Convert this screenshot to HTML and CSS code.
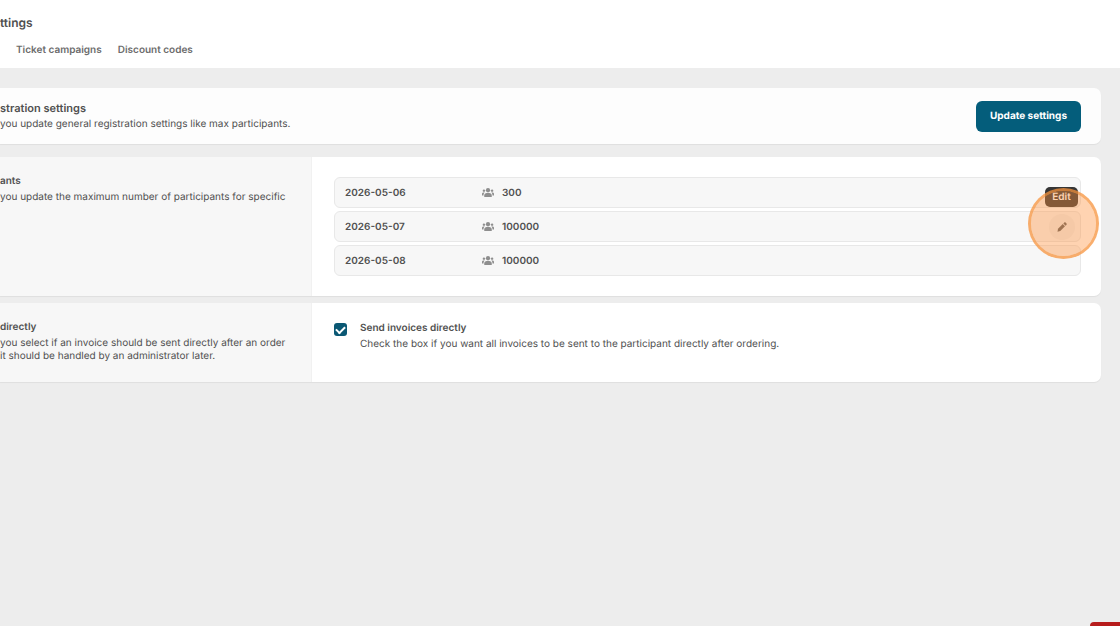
FILE: index.html
```html
<!DOCTYPE html>
<html lang="en">
<head>
  <meta charset="UTF-8">
  <title>Settings</title>
  <link rel="stylesheet" href="styles.css">
</head>
<body>

<svg class="sprite" aria-hidden="true">
  <symbol id="people" viewBox="0 0 24 18">
    <circle cx="12" cy="4.5" r="4.3"/>
    <circle cx="3.8" cy="5.3" r="2.4"/>
    <circle cx="20.2" cy="5.3" r="2.4"/>
    <path d="M4.500 18v-3C4.500 11.800 6.500 10 9.500 10h5c3 0 5 1.800 5 5v3z"/>
    <path d="M0 15v-3c0-2 1.200-3 3-3h2.500C3.800 10.500 3 12.500 3 15z"/>
    <path d="M24 15v-3c0-2-1.200-3-3-3h-2.500c1.700 1.500 2.500 3.500 2.500 6z"/>
  </symbol>
  <symbol id="pencil" viewBox="0 0 20 20">
    <path d="M11.500 4L16 8.500 6.500 18 1 19.500 2 13.500z"/>
    <path d="M12.700 2.800l1.500-1.500c1-1 2.300-1 3.300 0l1.200 1.200c1 1 1 2.300 0 3.300l-1.500 1.500z"/>
  </symbol>
</svg>

<header class="header">
  <h1>ttings</h1>
  <nav class="tabs">
    <a href="#campaigns">Ticket campaigns</a>
    <a href="#discounts">Discount codes</a>
  </nav>
</header>

<main class="content">
  <section class="card intro">
    <div>
      <h2>stration settings</h2>
      <p>you update general registration settings like max participants.</p>
    </div>
    <button type="button" class="btn-update">Update settings</button>
  </section>

  <section class="card split">
    <div class="info">
      <h3>ants</h3>
      <p>you update the maximum number of participants for specific</p>
    </div>
    <ul class="dates">
      <li>
        <span class="date">2026-05-06</span>
        <svg class="people"><use href="#people"/></svg>
        <span>300</span>
      </li>
      <li>
        <span class="date">2026-05-07</span>
        <svg class="people"><use href="#people"/></svg>
        <span>100000</span>
        <div class="edit">
          <button type="button" class="btn-edit" aria-label="Edit"><svg><use href="#pencil"/></svg></button>
          <span class="tooltip">Edit</span>
          <span class="highlight"></span>
        </div>
      </li>
      <li>
        <span class="date">2026-05-08</span>
        <svg class="people"><use href="#people"/></svg>
        <span>100000</span>
      </li>
    </ul>
  </section>

  <section class="card split">
    <div class="info">
      <h3>directly</h3>
      <p>you select if an invoice should be sent directly after an order<br>it should be handled by an administrator later.</p>
    </div>
    <div class="option">
      <input type="checkbox" id="invoices" checked>
      <div>
        <label for="invoices">Send invoices directly</label>
        <p>Check the box if you want all invoices to be sent to the participant directly after ordering.</p>
      </div>
    </div>
  </section>
</main>

<div class="corner"></div>

</body>
</html>
```

FILE: styles.css
```css
* {
  box-sizing: border-box;
}
body {
  margin: 0;
  background-color: #ededed;
  color: #505050;
  font-family: Inter, "Liberation Sans", sans-serif;
  font-size: 10px;
  line-height: 13px;
  text-rendering: geometricPrecision;
  overflow: hidden;
}
h1, h2, h3, p, ul {
  margin: 0;
  padding: 0;
}
.sprite {
  display: none;
}
.header {
  height: 68px;
  padding-top: 15px;
  background-color: #fff;
}
h1 {
  font-size: 12px;
  line-height: 16px;
  font-weight: 600;
}
.tabs {
  display: flex;
  gap: 16px;
  padding: 12px 16px;
  line-height: 14px;
}
.tabs a {
  color: #6c6c6c;
  font-weight: 600;
  text-decoration: none;
}
.content {
  display: flex;
  flex-direction: column;
  gap: 7px;
  padding: 20px 19px 20px 0;
}
.card {
  background-color: #fff;
  border-radius: 0 7px 7px 0;
  box-shadow: 0 1px 1px rgba(0, 0, 0, 0.06);
}
.intro {
  display: flex;
  align-items: center;
  justify-content: space-between;
  min-height: 56px;
  margin-bottom: 6px;
  padding: 12px 20px 12px 0;
  background-color: #fdfdfd;
}
h2 {
  margin-bottom: 3px;
  font-size: 11px;
  line-height: 14px;
  font-weight: 600;
}
h3, .option label {
  display: block;
  margin-bottom: 3px;
  font-size: 10px;
  line-height: 14px;
  font-weight: 600;
}
.btn-update {
  height: 31px;
  padding: 0 14px;
  border: 0;
  border-radius: 6px;
  background-color: #045d7b;
  color: #fff;
  font: 700 10px Inter, "Liberation Sans", sans-serif;
  text-rendering: inherit;
}
.split {
  display: grid;
  grid-template-columns: 312px 1fr;
  min-height: 79px;
}
.info {
  padding: 17px 20px 19px 0;
  background-color: #f7f7f7;
  border-right: 1px solid #f1f1f1;
}
.dates {
  display: flex;
  flex-direction: column;
  gap: 3px;
  padding: 20px 20px 20px 22px;
  list-style: none;
}
.dates li {
  display: flex;
  align-items: center;
  height: 31px;
  padding: 0 5px 0 10px;
  border: 1px solid #e8e8e8;
  border-radius: 6px;
  background-color: #f7f7f7;
  font-weight: 600;
  line-height: 14px;
}
.date {
  width: 137px;
}
.people {
  width: 12px;
  height: 9px;
  margin-right: 8px;
  fill: #8e8e8e;
}
.edit {
  position: relative;
  margin-left: auto;
}
.btn-edit {
  display: flex;
  align-items: center;
  justify-content: center;
  width: 26px;
  height: 26px;
  padding: 0;
  border: 0;
  border-radius: 50%;
  background-color: #eee;
}
.btn-edit svg {
  width: 10px;
  height: 10px;
  fill: #606060;
}
.tooltip {
  position: absolute;
  left: -4px;
  bottom: 33px;
  width: 33px;
  border-radius: 5px;
  background-color: #353535;
  color: #fff;
  font-weight: 600;
  line-height: 20px;
  text-align: center;
}
/* click marker around the edit button */
.highlight {
  position: absolute;
  top: -26px;
  left: -21px;
  width: 71px;
  height: 71px;
  border: 3px solid rgba(247, 147, 60, 0.75);
  border-radius: 50%;
  background-color: rgba(255, 145, 60, 0.4);
  background-clip: padding-box;
  pointer-events: none;
}
.option {
  display: flex;
  gap: 13px;
  padding: 18px 20px 18px 22px;
}
.option input {
  appearance: none;
  flex: none;
  display: grid;
  place-items: center;
  width: 13px;
  height: 13px;
  margin: 2px 0;
  border-radius: 3px;
  background-color: #0a5874;
}
.option input:checked::before {
  content: "";
  width: 7px;
  height: 4px;
  margin-bottom: 2px;
  border: solid #fff;
  border-width: 0 0 2px 2px;
  transform: rotate(-45deg);
}
.corner {
  position: fixed;
  right: 0;
  bottom: 0;
  width: 30px;
  height: 4px;
  border-radius: 5px 0 0 0;
  background-color: #b71c1c;
}
```
